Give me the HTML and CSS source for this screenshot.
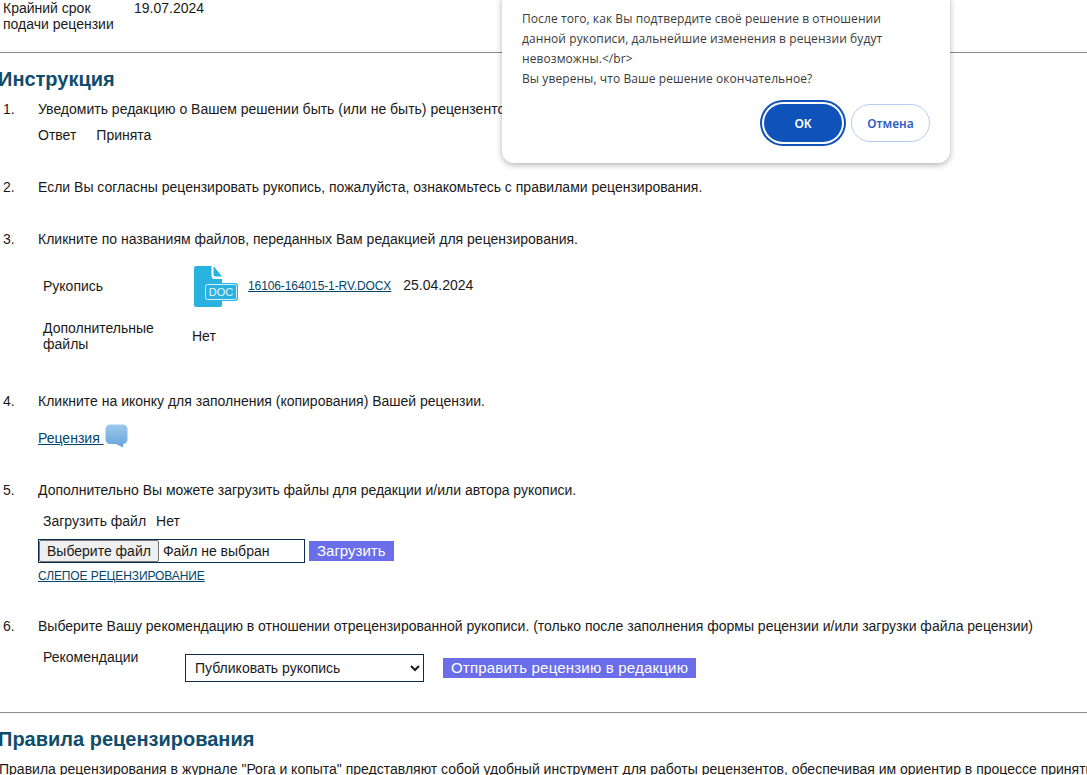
FILE: index.html
```html
<!DOCTYPE html>
<html>
<head>
    <meta charset="utf-8">
    <title>Рецензия</title>
    <link rel="stylesheet" href="styles.css">
</head>
<body>
    <div class="page">
        <div class="deadline">
            <div class="deadline-label">Крайний срок<br>подачи рецензии</div>
            <div>19.07.2024</div>
        </div>
        <hr class="rule">
        <h2 class="title">Инструкция</h2>

        <div class="step step-1">
            <span class="num">1.</span>
            <div class="step-body">
                <p>Уведомить редакцию о Вашем решении быть (или не быть) рецензентом данной рукописи.</p>
                <div class="answer"><span>Ответ</span><span>Принята</span></div>
            </div>
        </div>

        <div class="step step-2">
            <span class="num">2.</span>
            <div class="step-body">
                <p>Если Вы согласны рецензировать рукопись, пожалуйста, ознакомьтесь с правилами рецензирования.</p>
            </div>
        </div>

        <div class="step step-3">
            <span class="num">3.</span>
            <div class="step-body">
                <p>Кликните по названиям файлов, переданных Вам редакцией для рецензирования.</p>
                <div class="file-row">
                    <span class="file-label">Рукопись</span>
                    <svg class="doc-icon" width="44" height="41" viewBox="0 0 44 41">
                        <path d="M2 0H17.500V10a3 3 0 0 0 3 3H28V39a2 2 0 0 1-2 2H2a2 2 0 0 1-2-2V2a2 2 0 0 1 2-2Z" fill="#29b1e0"/>
                        <path d="M19.500 0L28 10.500H21.500a2 2 0 0 1-2-2Z" fill="#29b1e0"/>
                        <rect x="10" y="17" width="34" height="18" rx="3" fill="#29b1e0"/>
                        <rect x="11.500" y="18.500" width="31" height="15" rx="2" fill="none" stroke="#d6f0fa" stroke-width="1"/>
                        <text x="27" y="29.500" text-anchor="middle" class="doc-text">DOC</text>
                    </svg>
                    <a class="file-link" href="#">16106-164015-1-RV.DOCX</a>
                    <span class="file-date">25.04.2024</span>
                </div>
                <div class="extra-row">
                    <span class="extra-label">Дополнительные файлы</span>
                    <span>Нет</span>
                </div>
            </div>
        </div>

        <div class="step step-4">
            <span class="num">4.</span>
            <div class="step-body">
                <p>Кликните на иконку для заполнения (копирования) Вашей рецензии.</p>
                <div class="review-row">
                    <a href="#">Рецензия </a>
                    <svg class="bubble" width="24" height="24" viewBox="0 0 24 24">
                        <defs>
                            <linearGradient id="bubble-fill" x1="0" y1="0" x2="0" y2="1">
                                <stop offset="0" stop-color="#9cc8ec"/>
                                <stop offset="1" stop-color="#68a5da"/>
                            </linearGradient>
                        </defs>
                        <path d="M5 0.500H18a4.500 4.500 0 0 1 4.500 4.500V15.500a4.500 4.500 0 0 1-4.500 4.500H18V23.500L11 20H5a4.500 4.500 0 0 1-4.500-4.500V5a4.500 4.500 0 0 1 4.500-4.500Z" fill="url(#bubble-fill)"/>
                    </svg>
                </div>
            </div>
        </div>

        <div class="step step-5">
            <span class="num">5.</span>
            <div class="step-body">
                <p>Дополнительно Вы можете загрузить файлы для редакции и/или автора рукописи.</p>
                <div class="upload-label"><span>Загрузить файл</span><span>Нет</span></div>
                <div class="upload-row">
                    <div class="file-input">
                        <button class="file-btn" type="button">Выберите файл</button>
                        <span>Файл не выбран</span>
                    </div>
                    <button class="action" type="button">Загрузить</button>
                </div>
                <a class="blind-link" href="#">СЛЕПОЕ РЕЦЕНЗИРОВАНИЕ</a>
            </div>
        </div>

        <div class="step step-6">
            <span class="num">6.</span>
            <div class="step-body">
                <p>Выберите Вашу рекомендацию в отношении отрецензированной рукописи. (только после заполнения формы рецензии и/или загрузки файла рецензии)</p>
                <div class="recommend-row">
                    <span class="recommend-label">Рекомендации</span>
                    <select class="recommend-select">
                        <option>Публиковать рукопись</option>
                    </select>
                    <button class="action action-send" type="button">Отправить рецензию в редакцию</button>
                </div>
            </div>
        </div>

        <hr class="rule rule-bottom">
        <h2 class="title title-rules">Правила рецензирования</h2>
        <p class="rules-text">Правила рецензирования в журнале "Рога и копыта" представляют собой удобный инструмент для работы рецензентов, обеспечивая им ориентир в процессе принятия</p>
    </div>

    <div class="dialog">
        <p>После того, как Вы подтвердите своё решение в отношении данной рукописи, дальнейшие изменения в рецензии будут невозможны.&lt;/br&gt;<br>Вы уверены, что Ваше решение окончательное?</p>
        <div class="dialog-actions">
            <button class="btn-ok" type="button">OK</button>
            <button class="btn-cancel" type="button">Отмена</button>
        </div>
    </div>
</body>
</html>
```

FILE: styles.css
```css
:root {
    --heading-color: #0e4d6b;
    --link-color: #00456b;
    --button-color: #6a6eea;
    --border-color: #0c2c4c;
    --rule-color: #8c8c8c;
}

html, body {
    margin: 0;
    height: 775px;
    overflow: hidden;
    background: #fff;
}

body {
    font-family: "Liberation Sans", Arial, sans-serif;
    font-size: 14px;
    line-height: 16px;
    color: #1a1a1a;
    position: relative;
}

p {
    margin: 0;
}

a {
    color: var(--link-color);
}

.page {
    margin-left: -1px;
    white-space: nowrap;
}

.deadline {
    display: flex;
    padding: 0 0 0 4px;
}

.deadline-label {
    width: 131px;
}

.rule {
    border: none;
    border-top: 1px solid var(--rule-color);
    margin: 20px 0 0;
}

.title {
    margin: 14px 0 0 -1px;
    font-size: 20px;
    line-height: 24px;
    font-weight: bold;
    color: var(--heading-color);
}

.step {
    display: flex;
}

.num {
    width: 39px;
    padding-left: 4px;
    box-sizing: border-box;
    flex: none;
}

.step-1 {
    margin-top: 10px;
}

.answer {
    display: flex;
    gap: 20px;
    margin-top: 10px;
}

.step-2 {
    margin-top: 36px;
}

.step-3 {
    margin-top: 36px;
}

.file-row {
    display: flex;
    align-items: flex-start;
    margin-top: 19px;
    padding-left: 5px;
    height: 41px;
}

.file-label {
    width: 151px;
    padding-top: 12px;
}

.doc-icon {
    flex: none;
}

.doc-text {
    font-family: "Liberation Sans", Arial, sans-serif;
    font-size: 11px;
    fill: #e8f7fc;
}

.file-link {
    margin-left: 10px;
    margin-top: 12px;
    font-size: 12px;
    letter-spacing: -0.1px;
}

.file-date {
    margin-left: 12px;
    margin-top: 11px;
}

.extra-row {
    display: flex;
    align-items: center;
    margin-top: 13px;
    padding-left: 5px;
}

.extra-label {
    width: 149px;
    white-space: normal;
    padding-right: 20px;
    box-sizing: border-box;
}

.step-4 {
    margin-top: 41px;
}

.review-row {
    display: flex;
    align-items: flex-start;
    margin-top: 14px;
}

.review-row a {
    white-space: pre;
    margin-top: 7px;
}

.bubble {
    margin-left: 1px;
    margin-top: 1px;
}

.step-5 {
    margin-top: 34px;
}

.upload-label {
    display: flex;
    gap: 10px;
    margin-top: 15px;
    padding-left: 5px;
}

.upload-row {
    display: flex;
    align-items: center;
    gap: 4px;
    margin-top: 10px;
}

.file-input {
    display: flex;
    align-items: center;
    gap: 4px;
    width: 267px;
    height: 24px;
    box-sizing: border-box;
    border: 1px solid var(--border-color);
}

.file-btn {
    height: 22px;
    padding: 0 7px;
    font: inherit;
    color: #1a1a1a;
    background: #efefef;
    border: 1px solid #767676;
    border-radius: 2px;
}

.action {
    height: 20px;
    padding: 0 8px;
    border: none;
    background: var(--button-color);
    color: #fff;
    font: inherit;
    font-size: 15px;
}

.blind-link {
    display: block;
    margin-top: 6px;
    font-size: 12px;
    line-height: 14px;
    letter-spacing: -0.1px;
}

.step-6 {
    margin-top: 35px;
}

.recommend-row {
    display: flex;
    align-items: flex-start;
    margin-top: 15px;
    padding-left: 5px;
}

.recommend-label {
    width: 142px;
}

.recommend-select {
    width: 239px;
    height: 28px;
    margin-top: 5px;
    padding-left: 5px;
    font: inherit;
    color: #1a1a1a;
    background: #fff;
    border: 1px solid var(--border-color);
    border-radius: 0;
}

.action-send {
    margin-left: 19px;
    margin-top: 9px;
    letter-spacing: 0.2px;
}

.rule-bottom {
    margin-top: 30px;
}

.title-rules {
    margin-top: 14px;
}

.rules-text {
    margin-top: 10px;
}

.dialog {
    position: absolute;
    left: 502px;
    top: -10px;
    width: 448px;
    height: 173px;
    box-sizing: border-box;
    padding: 19px 20px 0;
    background: #fff;
    border-radius: 12px;
    box-shadow: 0 2px 6px rgba(0, 0, 0, 0.3);
    font-family: "Open Sans", "Noto Sans", sans-serif;
    font-size: 12px;
    line-height: 20px;
    letter-spacing: 0.08px;
    color: #3a3a3a;
}

.dialog p {
    width: 372px;
}

.dialog-actions {
    display: flex;
    justify-content: flex-end;
    align-items: center;
    gap: 9px;
    margin-top: 15px;
}

.btn-ok, .btn-cancel {
    font-family: "Noto Sans", "Open Sans", sans-serif;
    font-size: 12px;
    font-weight: 600;
    border-radius: 19px;
}

.btn-ok {
    width: 78px;
    height: 38px;
    color: #fff;
    background: #0f52ba;
    border: none;
    box-shadow: 0 0 0 2px #fff, 0 0 0 4px #0f52ba;
}

.btn-cancel {
    width: 79px;
    height: 38px;
    color: #2f5fc4;
    background: #fff;
    border: 1px solid #b4cdf5;
}
```
